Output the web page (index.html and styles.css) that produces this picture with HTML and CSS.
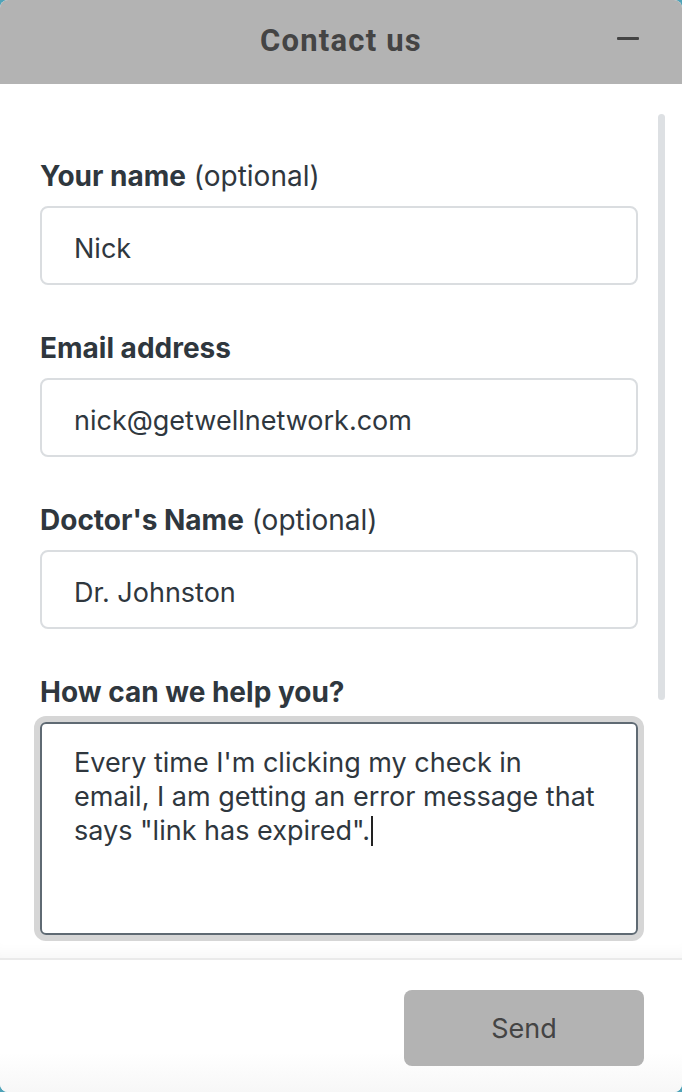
FILE: index.html
```html
<!DOCTYPE html>
<html>
<head>
<meta charset="utf-8">
<link rel="stylesheet" href="styles.css">
</head>
<body>
<div class="widget">
  <header class="head">
    <h1 class="title">Contact us</h1>
    <span class="minimize" aria-label="Minimize"></span>
  </header>
  <main class="body">
    <form class="form">
      <div class="field">
        <label class="label"><b>Your name</b> (optional)</label>
        <div class="input">Nick</div>
      </div>
      <div class="field">
        <label class="label"><b>Email address</b></label>
        <div class="input">nick@getwellnetwork.com</div>
      </div>
      <div class="field">
        <label class="label"><b>Doctor's Name</b> (optional)</label>
        <div class="input">Dr. Johnston</div>
      </div>
      <div class="field">
        <label class="label"><b>How can we help you?</b></label>
        <div class="textarea">Every time I'm clicking my check in email, I am getting an error message that says "link has expired".<span class="caret"></span></div>
      </div>
    </form>
    <div class="scrollbar"></div>
  </main>
  <footer class="foot">
    <button class="send" type="button">Send</button>
  </footer>
</div>
</body>
</html>
```
FILE: styles.css
```css
html, body {
  margin: 0;
  padding: 0;
  background: #4fa3b8;
}
* {
  box-sizing: border-box;
}
.widget {
  width: 682px;
  height: 1092px;
  background: #fff;
  border-radius: 8px;
  overflow: hidden;
  display: flex;
  flex-direction: column;
  font-family: Inter, "Noto Sans", sans-serif;
  color: #2f373e;
}
.head {
  height: 84px;
  flex: none;
  background: #b3b3b3;
  display: flex;
  align-items: center;
  justify-content: center;
  position: relative;
}
.title {
  margin: 0 0 4px 0;
  font-family: Roboto, sans-serif;
  font-weight: 700;
  font-size: 31px;
  letter-spacing: 1.2px;
  color: #444;
}
.minimize {
  position: absolute;
  right: 43px;
  top: 37px;
  width: 22px;
  height: 3px;
  border-radius: 1px;
  background: #444;
}
.body {
  flex: 1;
  display: flex;
  min-height: 0;
  border-bottom: 2px solid #eaeaea;
  box-shadow: inset 0 -14px 14px -10px rgba(0,0,0,0.04);
}
.form {
  width: 638px;
  flex: none;
  padding: 75px 0 0 40px;
  display: flex;
  flex-direction: column;
  gap: 46px;
}
.field {
  display: flex;
  flex-direction: column;
  gap: 13px;
}
.label {
  font-size: 28px;
  line-height: 34px;
  font-weight: 400;
  color: #2f373e;
  white-space: nowrap;
}
.label b {
  font-weight: 700;
}
.input {
  height: 79px;
  border: 2px solid #dadde0;
  border-radius: 8px;
  padding: 5px 32px 0;
  display: flex;
  align-items: center;
  font-size: 27px;
  color: #2f373e;
}
.textarea {
  height: 213px;
  border: 2px solid #5f6a73;
  border-radius: 6px;
  box-shadow: 0 0 0 6px #d6d6d6;
  padding: 22px 32px;
  font-size: 27px;
  line-height: 34px;
  color: #2f373e;
}
.caret {
  display: inline-block;
  width: 2px;
  height: 30px;
  background: #222;
  vertical-align: -6px;
  margin-left: 1px;
}
.scrollbar {
  width: 7px;
  height: 586px;
  margin: 30px 0 0 20px;
  background: #dde0e3;
  border-radius: 4px;
}
.foot {
  height: 132px;
  flex: none;
  display: flex;
  justify-content: flex-end;
  padding: 30px 38px 0 0;
  background: linear-gradient(#fff 70%, #f7f7f7);
}
.send {
  width: 240px;
  height: 76px;
  border: none;
  border-radius: 8px;
  background: #b3b3b3;
  font-family: Inter, "Noto Sans", sans-serif;
  font-size: 27px;
  color: #444;
}
```
